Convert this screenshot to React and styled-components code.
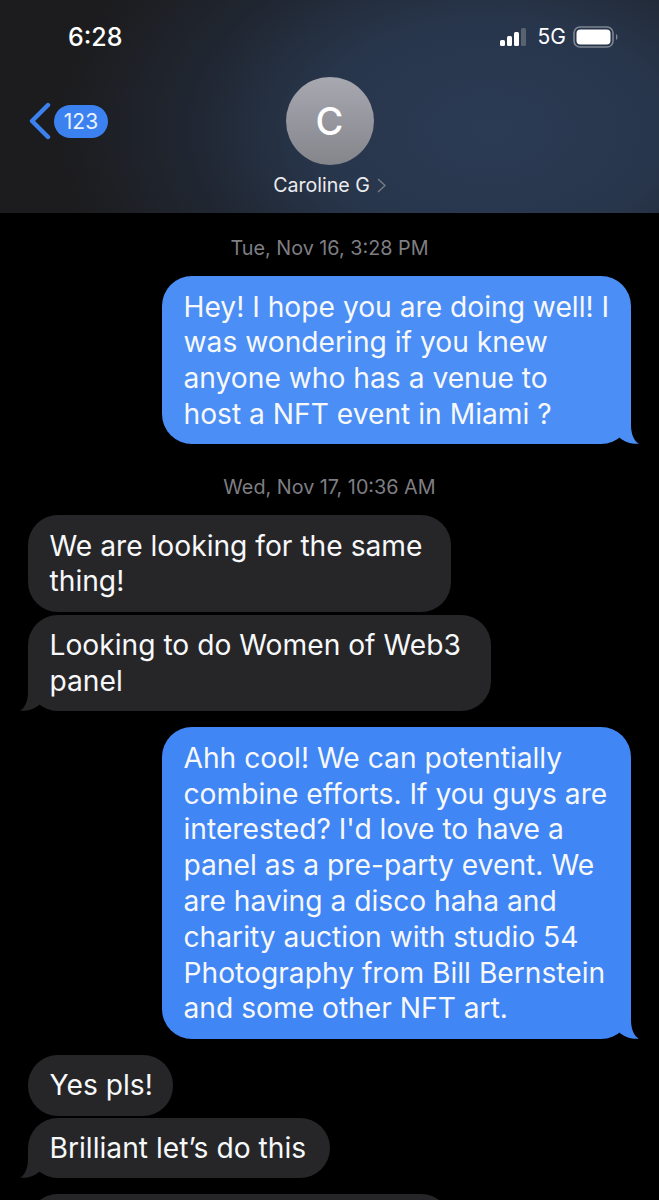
import React from 'react';
import styled, { createGlobalStyle } from 'styled-components';

const GlobalStyle = createGlobalStyle`
  html, body {
    margin: 0;
    background: #000;
  }
`;

const Page = styled.div`
  width: 659px;
  height: 1200px;
  overflow: hidden;
  background: #000;
  color: #fff;
  font-family: Inter, "Liberation Sans", sans-serif;
`;

const Header = styled.header`
  height: 213px;
  box-sizing: border-box;
  padding-top: 22px;
  background:
    radial-gradient(ellipse 430px 270px at 490px 130px, #2b3b54 0%, #28364c 40%, rgba(34, 43, 58, 0.7) 70%, rgba(28, 28, 30, 0) 100%),
    #1c1c1e;
`;

const StatusBar = styled.div`
  display: flex;
  align-items: center;
  justify-content: space-between;
  height: 30px;
  padding: 0 40px 0 68px;
`;

const Time = styled.span`
  font-size: 25px;
  font-weight: 500;
  line-height: 30px;
`;

const StatusIcons = styled.div`
  display: flex;
  align-items: center;
  gap: 7px;
`;

const Network = styled.span`
  font-size: 21px;
  font-weight: 400;
  line-height: 30px;
  margin-left: 5px;
`;

const NavRow = styled.div`
  display: grid;
  grid-template-columns: 1fr auto 1fr;
  margin-top: 25px;
`;

const Back = styled.div`
  display: flex;
  align-items: center;
  gap: 3px;
  height: 88px;
  padding-left: 29px;
`;

const Badge = styled.span`
  width: 54px;
  height: 33px;
  border-radius: 17px;
  background: #3b82f0;
  font-size: 21px;
  line-height: 33px;
  text-align: center;
  color: #e9f1fe;
`;

const Contact = styled.div`
  display: flex;
  flex-direction: column;
  align-items: center;
`;

const Avatar = styled.div`
  width: 88px;
  height: 88px;
  border-radius: 50%;
  background: linear-gradient(#a7a8b0, #85858c);
  font-size: 38px;
  font-weight: 500;
  line-height: 88px;
  text-align: center;
`;

const Name = styled.div`
  display: flex;
  align-items: center;
  gap: 7px;
  margin-top: 8px;
  font-size: 19.6px;
  line-height: 24px;
  color: #ececee;
  white-space: nowrap;
`;

const Thread = styled.main`
  display: flex;
  flex-direction: column;
  padding: 0 28px;
`;

const Stamp = styled.div`
  margin-top: ${(p) => p.$top}px;
  margin-bottom: 16px;
  font-size: 19.8px;
  line-height: 24px;
  text-align: center;
  color: #7e7e83;
`;

const Bubble = styled.div`
  position: relative;
  box-sizing: border-box;
  width: ${(p) => p.$width}px;
  min-height: ${(p) => p.$height || 0}px;
  margin-top: ${(p) => p.$top || 0}px;
  align-self: ${(p) => (p.$mine ? 'flex-end' : 'flex-start')};
  padding: 13.5px 0 11.5px 21.5px;
  border-radius: 30px;
  background: ${(p) => p.$color};
  font-size: 28.2px;
  line-height: 35.8px;
  color: #f7f8fa;
  white-space: pre;
`;

const Tail = styled.svg`
  position: absolute;
  bottom: 0;
  ${(p) => (p.$mine ? 'right: -8px;' : 'left: -8px; transform: scaleX(-1);')}
  width: 30px;
  height: 30px;
`;

// same shape on both sides, mirrored for incoming bubbles
const BubbleTail = ({ mine, color }) => (
  <Tail $mine={mine} viewBox="0 0 30 30">
    <path d="M22 0 L22 11 C22 20 25 27 30 29.7 C24 30.3 15 28.5 10 23 L10 0 Z" fill={color} />
  </Tail>
);

const SignalIcon = () => (
  <svg width="26" height="18" viewBox="0 0 26 18">
    <rect x="0" y="12" width="5" height="6" rx="1.5" fill="#fff" />
    <rect x="7" y="8" width="5" height="10" rx="1.5" fill="#fff" />
    <rect x="14" y="4" width="5" height="14" rx="1.5" fill="#fff" />
    <rect x="21" y="0" width="5" height="18" rx="1.5" fill="#59636f" />
  </svg>
);

const BatteryIcon = () => (
  <svg width="46" height="22" viewBox="0 0 46 22">
    <rect x="1" y="1" width="39" height="20" rx="6" fill="none" stroke="#7d8590" strokeWidth="1.6" />
    <rect x="3.5" y="3.5" width="34" height="15" rx="4" fill="#fff" />
    <path d="M43 8 C45 8.5 45 13.5 43 14 Z" fill="#7d8590" />
  </svg>
);

const BackIcon = () => (
  <svg width="22" height="38" viewBox="0 0 22 38">
    <path d="M19 3 L3 19 L19 35" fill="none" stroke="#3b82f0" strokeWidth="4.4" strokeLinecap="round" strokeLinejoin="round" />
  </svg>
);

const ChevronIcon = () => (
  <svg width="9" height="15" viewBox="0 0 9 15">
    <path d="M1 1 L8 7.5 L1 14" fill="none" stroke="#777c84" strokeWidth="1.4" />
  </svg>
);

const GRAY = '#262628';
const BLUE_TOP = '#4a8ef6';
const BLUE_LOW = '#4086f5';

const App = () => (
  <Page>
    <GlobalStyle />
    <Header>
      <StatusBar>
        <Time>6:28</Time>
        <StatusIcons>
          <SignalIcon />
          <Network>5G</Network>
          <BatteryIcon />
        </StatusIcons>
      </StatusBar>
      <NavRow>
        <Back>
          <BackIcon />
          <Badge>123</Badge>
        </Back>
        <Contact>
          <Avatar>C</Avatar>
          <Name>
            Caroline G
            <ChevronIcon />
          </Name>
        </Contact>
      </NavRow>
    </Header>
    <Thread>
      <Stamp $top={23}>Tue, Nov 16, 3:28 PM</Stamp>
      <Bubble $mine $color={BLUE_TOP} $width={469}>
        {'Hey! I hope you are doing well! I\nwas wondering if you knew\nanyone who has a venue to\nhost a NFT event in Miami ?'}
        <BubbleTail mine color={BLUE_TOP} />
      </Bubble>
      <Stamp $top={31}>Wed, Nov 17, 10:36 AM</Stamp>
      <Bubble $color={GRAY} $width={423}>{'We are looking for the same\nthing!'}</Bubble>
      <Bubble $color={GRAY} $width={463} $top={3}>
        {'Looking to do Women of Web3\npanel'}
        <BubbleTail color={GRAY} />
      </Bubble>
      <Bubble $mine $color={BLUE_LOW} $width={469} $top={16}>
        {"Ahh cool! We can potentially\ncombine efforts. If you guys are\ninterested? I'd love to have a\npanel as a pre-party event. We\nare having a disco haha and\ncharity auction with studio 54\nPhotography from Bill Bernstein\nand some other NFT art."}
        <BubbleTail mine color={BLUE_LOW} />
      </Bubble>
      <Bubble $color={GRAY} $width={145} $top={16}>Yes pls!</Bubble>
      <Bubble $color={GRAY} $width={302} $top={2}>
        Brilliant let’s do this
        <BubbleTail color={GRAY} />
      </Bubble>
      <Bubble $color={GRAY} $width={423} $height={62} $top={16} />
    </Thread>
  </Page>
);

export default App;
